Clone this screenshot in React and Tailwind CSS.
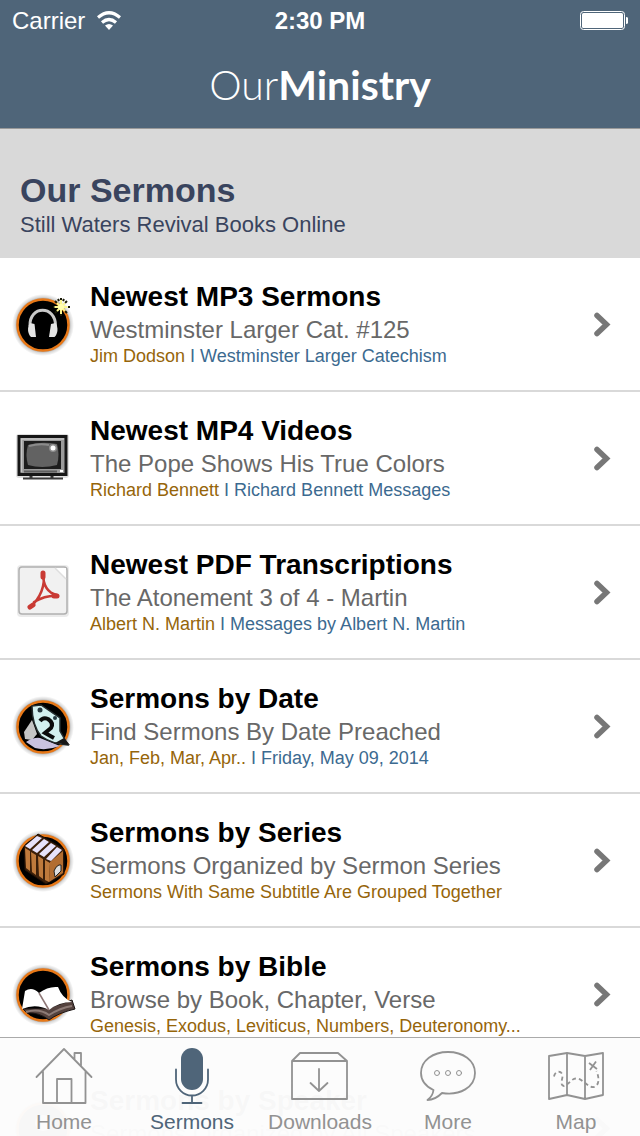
import { useState } from 'react';

// Round badge shared by most of the list icons
function Badge({ children }) {
  return (
    <svg className="w-16 h-16" viewBox="0 0 64 64" fill="none">
      <defs>
        <radialGradient id="badgeGlow">
          <stop offset="0.82" stopColor="#000" stopOpacity="0.45" />
          <stop offset="0.9" stopColor="#000" stopOpacity="0.15" />
          <stop offset="1" stopColor="#000" stopOpacity="0" />
        </radialGradient>
      </defs>
      <circle cx="31" cy="33" r="31" fill="url(#badgeGlow)" />
      <circle cx="31" cy="33" r="25.500" fill="#000" stroke="#e87817" strokeWidth="2.500" />
      {children}
    </svg>
  );
}

function HeadphonesIcon() {
  return (
    <Badge>
      <path d="M18 34 C17 13 44 13 43.500 34" stroke="#c9c9c9" strokeWidth="3" />
      <path d="M18 31 L22.500 32 L24 45 L19 45 C15.500 42 15 35 18 31Z" fill="#e4e4e4" />
      <path d="M43.500 31 L39 32 L37 45 L42.500 45 C46 42 46.500 35 43.500 31Z" fill="#e4e4e4" />
      <path d="M49 6v2M49 22v2M41 15h2M56 15h2M43 9l2 2M55 9l-2 2M43 21l2-2M55 21l-2-2M46 7l1 2M52 7l-1 2" stroke="#1b1b08" strokeWidth="2" />
      <path d="M49 8v14M42.500 15h13M45 11l8 8M53 11l-8 8" stroke="#fbf68e" strokeWidth="2" />
      <circle cx="49" cy="15" r="3" fill="#fffdb0" />
    </Badge>
  );
}

function TvIcon() {
  return (
    <svg className="w-16 h-16" viewBox="0 0 64 64" fill="none">
      <rect x="4" y="8" width="53" height="44" rx="3" fill="#000" opacity="0.12" />
      <path d="M19 49v4M40 49v4" stroke="#333" strokeWidth="3" />
      <path d="M11 52.500h40" stroke="#3a3a3a" strokeWidth="2" />
      <rect x="7" y="10.500" width="47" height="38" fill="#9b9b9b" stroke="#161616" strokeWidth="3" />
      <path d="M9.500 46V13H52" stroke="#c6c6c6" strokeWidth="1.500" />
      <rect x="12" y="15" width="37" height="28" fill="#1d1d1d" />
      <path d="M16 19 Q29 15 45 18 Q48 28 45 39 Q30 43 16 39 Q13 29 16 19Z" fill="#626262" />
      <path d="M17 20 Q28 17 37 19" stroke="#8b8b8b" strokeWidth="2" />
      <circle cx="41" cy="22" r="4" fill="#8f8f8f" />
      <circle cx="41" cy="22" r="2.500" fill="#fff" />
      <path d="M12 45.500h33" stroke="#5f5f5f" strokeWidth="2" />
      <path d="M48 45h3" stroke="#fff" strokeWidth="2" />
    </svg>
  );
}

function PdfIcon() {
  return (
    <svg className="w-16 h-16" viewBox="0 0 64 64" fill="none">
      <rect x="5" y="5" width="52" height="52" rx="4" fill="#000" opacity="0.08" />
      <rect x="7" y="7" width="48" height="47" rx="3" fill="#f1f1f1" stroke="#b0b0b0" strokeWidth="1.500" />
      <path d="M43 8 L54 19 L54 8Z" fill="#fff" />
      <path d="M43 8 L54 19" stroke="#dedede" strokeWidth="1.500" />
      <path d="M31 13 C31 25 36 33 45 35 M31 13 C34 25 28 39 18 47 M22 42 C29 38 37 35 46 36" stroke="#c93a34" strokeWidth="2.500" strokeLinecap="round" />
      <path d="M31 13v4M18 47l3-2M42 36h3" stroke="#c93a34" strokeWidth="5" strokeLinecap="round" />
    </svg>
  );
}

function DateIcon() {
  return (
    <Badge>
      <path d="M12 38 L20 26 L25 40 L20 46 L13 45Z" fill="#c5c5c5" />
      <path d="M14 48 Q22 43 28 44 L48 52 Q34 57 23 54Z" fill="#c9c2e0" />
      <path d="M20 12 L29 11 L48 24 L48 37 L56 51 Q40 50 29 42 Q20 31 20 12Z" fill="#d3f0ef" stroke="#242c2e" strokeWidth="1.500" />
      <path d="M28 27 Q31 23 36 25 Q42 29 39 34 L33 39 L42 44" stroke="#0c0c0c" strokeWidth="4" />
      <circle cx="28" cy="16" r="2.500" fill="#26383f" />
      <circle cx="43" cy="24" r="2" fill="#26383f" />
      <path d="M43 49 L58 51 L52 44Z" fill="#171717" />
    </Badge>
  );
}

function BooksIcon() {
  return (
    <Badge>
      <path d="M12 19 L26 6 L52 21 L52 46 L34 56 L13 42Z" fill="#3b1f0a" stroke="#1d0f05" strokeWidth="1" />
      <path d="M13 20l5 3v20l-4-3zM19 24l5 3v20l-4-3zM26 28l5 3v20l-4-3zM33 32l5 3-1 19-4-2z" fill="#bf7a3c" />
      <path d="M38 34 L51 23 L51 45 L37 54Z" fill="#b26d31" />
      <path d="M13 18 L25 8 L30 10 L18 21ZM20 22 L32 11 L37 14 L25 25ZM27 26 L39 15 L44 18 L32 29ZM34 31 L45 19 L50 22 L39 33Z" fill="#e6e2fb" />
      <path d="M42 43 Q45 36 49 37 V43 L43 49Z" fill="#dedede" stroke="#222" strokeWidth="1" />
    </Badge>
  );
}

function BibleIcon() {
  return (
    <Badge>
      <path d="M11 47 L15 51 Q27 50 37 58 Q46 51 63 47 L60 38 L37 46Z" fill="#54423e" stroke="#1b1413" strokeWidth="1" />
      <path d="M14 50 Q27 46 37 53 Q48 46 60 44" stroke="#8d7b76" strokeWidth="2" />
      <path d="M13 29 Q20 24 27 31 L37 48 Q24 41 10 47Z" fill="#fff" />
      <path d="M27 31 Q36 24 46 25 Q50 36 60 40 Q47 40 37 48Z" fill="#fff" />
      <path d="M27 31 L37 48" stroke="#8d7776" strokeWidth="1.500" />
    </Badge>
  );
}

function SpeakerIcon() {
  return (
    <Badge>
      <circle cx="31" cy="27" r="8" fill="#ccc" />
      <path d="M17 50 Q31 30 45 50Z" fill="#ccc" />
    </Badge>
  );
}

function Chevron() {
  return (
    <svg className="w-5 h-7 shrink-0" viewBox="0 0 20 28" fill="none">
      <path d="M5 5.500 L14.500 14.500 L5 23.500" stroke="#777" strokeWidth="5.500" strokeLinecap="round" />
    </svg>
  );
}

function TabSvg({ children }) {
  return (
    <svg className="w-15 h-15" viewBox="0 0 60 60" fill="none" stroke="currentColor" strokeWidth="1.800" strokeLinecap="round" strokeLinejoin="round">
      {children}
    </svg>
  );
}

const sermons = [
  { title: 'Newest MP3 Sermons', sub: 'Westminster Larger Cat. #125', by: 'Jim Dodson', extra: 'Westminster Larger Catechism', Icon: HeadphonesIcon },
  { title: 'Newest MP4 Videos', sub: 'The Pope Shows His True Colors', by: 'Richard Bennett', extra: 'Richard Bennett Messages', Icon: TvIcon },
  { title: 'Newest PDF Transcriptions', sub: 'The Atonement 3 of 4 - Martin', by: 'Albert N. Martin', extra: 'Messages by Albert N. Martin', Icon: PdfIcon },
  { title: 'Sermons by Date', sub: 'Find Sermons By Date Preached', by: 'Jan, Feb, Mar, Apr..', extra: 'Friday, May 09, 2014', Icon: DateIcon },
  { title: 'Sermons by Series', sub: 'Sermons Organized by Sermon Series', by: 'Sermons With Same Subtitle Are Grouped Together', Icon: BooksIcon },
  { title: 'Sermons by Bible', sub: 'Browse by Book, Chapter, Verse', by: 'Genesis, Exodus, Leviticus, Numbers, Deuteronomy...', Icon: BibleIcon },
  { title: 'Sermons by Speaker', sub: 'Sermons Organized by All Speakers', by: '', Icon: SpeakerIcon },
];

const tabs = [
  {
    name: 'Home',
    icon: (
      <TabSvg>
        <path d="M2.500 31 L30 3 L57.500 31M9 25.500V57H51.500V25.500M23 57V33H37.500V57M40.500 13V7H47V19.500" />
      </TabSvg>
    ),
  },
  {
    name: 'Sermons',
    icon: (
      <TabSvg>
        <rect x="19" y="2" width="22" height="42" rx="11" fill="currentColor" stroke="none" />
        <path d="M14 23.500V33.500A16 16 0 0 0 46 33.500V23.500M30 50V57M20.500 57H39.500" />
      </TabSvg>
    ),
  },
  {
    name: 'Downloads',
    icon: (
      <TabSvg>
        <path d="M2 15H57V53H2ZM2 15L10 7H48L57 15M29 23V45M20.500 37L29 45L37.500 37" />
      </TabSvg>
    ),
  },
  {
    name: 'More',
    icon: (
      <TabSvg>
        <path d="M15.500 44C7 40 3 34 3 27C3 14.500 15 6 30 6C45 6 57 14.500 57 27C57 41 42 50 24 47C20 51 15 54 9.500 54C13 51.500 15 48 15.500 44Z" />
        <g strokeWidth="1">
          <circle cx="19" cy="27" r="2.500" />
          <circle cx="30" cy="27" r="2.500" />
          <circle cx="41" cy="27" r="2.500" />
        </g>
      </TabSvg>
    ),
  },
  {
    name: 'Map',
    icon: (
      <TabSvg>
        <path d="M3 10L21 7L39 10L57 7V49L39 53L21 49L3 53ZM21 7V49M39 10V53" />
        <path d="M8 30.500C9 25 15 24 16.500 29C17 33 13 39 18 40C23 39 25 32 31 32.500C37 33 42 42 48 41C54 39 53 31 50.500 25" strokeDasharray="4 3" strokeLinecap="butt" />
        <path d="M43 17L51 23M50 15.500L44 24" strokeLinecap="butt" />
      </TabSvg>
    ),
  },
];

export default function App() {
  const [activeTab, setActiveTab] = useState('Sermons');

  return (
    <div className="relative h-screen flex flex-col overflow-hidden bg-white font-['Liberation_Sans',Arial,sans-serif]">
      <header className="shrink-0 bg-[#4f6579] text-white border-b border-[#999]">
        {/* Status bar */}
        <div className="grid grid-cols-3 items-center h-10 px-3 pt-[2px] text-[24px] leading-9">
          <div className="flex items-center gap-3">
            <span>Carrier</span>
            <svg className="w-6 h-5" viewBox="0 0 24 20" fill="none" stroke="#fff" strokeWidth="3.200">
              <path d="M1 6.500Q12 -3 23 6.500M5 11.500Q12 5.500 19 11.500" />
              <path d="M8 14.500Q12 11.500 16 14.500L12 19Z" fill="#fff" stroke="none" />
            </svg>
          </div>
          <span className="text-center font-bold">2:30 PM</span>
          <svg className="w-12 h-5 justify-self-end" viewBox="0 0 48 20" fill="none">
            <rect x="0.500" y="0.500" width="44" height="18" rx="3" stroke="#fff" />
            <rect x="2" y="2" width="41" height="15" rx="1.500" fill="#fff" />
            <path d="M46 6Q49 6.500 49 9.500Q49 12.500 46 13Z" fill="#fff" />
          </svg>
        </div>
        <div className="h-22 flex items-center justify-center font-[Lato,sans-serif] text-[41px] leading-[88px] pt-[2px]">
          <span className="font-light">Our</span>
          <span className="font-bold">Ministry</span>
        </div>
      </header>

      <main className="flex-1 overflow-y-auto [scrollbar-width:none]">
        <section className="bg-[#d9d9d9] text-[#39445e] px-5 pt-[42px] pb-[17px]">
          <h1 className="text-[34px] leading-[38px] font-bold">Our Sermons</h1>
          <p className="text-[22px] leading-8">Still Waters Revival Books Online</p>
        </section>

        <ul>
          {sermons.map(({ title, sub, by, extra, Icon }) => (
            <li key={title} className="border-b-2 border-[#d9d9d9]">
              <a href="#" className="flex items-center gap-[14px] h-[132px] pl-3 pr-7">
                <Icon />
                <div className="flex-1 whitespace-nowrap pb-[2px]">
                  <h2 className="text-[28px] leading-8 font-bold text-black">{title}</h2>
                  <p className="text-[24px] leading-[34px] text-[#686868]">{sub}</p>
                  <p className="text-[18px] leading-[18px] min-h-[18px] text-[#96650a]">
                    {by}
                    {extra && <span className="text-[#3c6a90]"> I {extra}</span>}
                  </p>
                </div>
                <Chevron />
              </a>
            </li>
          ))}
        </ul>
      </main>

      {/* Tab bar floats above the scrolling list */}
      <nav className="absolute inset-x-0 bottom-0 grid grid-cols-5 bg-[#fcfcfc]/98 border-t border-[#aaa]">
        {tabs.map((tab) => (
          <button
            key={tab.name}
            onClick={() => setActiveTab(tab.name)}
            className={`flex flex-col items-center gap-[2px] pt-2 ${
              activeTab === tab.name ? 'text-[#4f6579]' : 'text-[#929292]'
            }`}
          >
            {tab.icon}
            <span className="text-[21px] leading-7">{tab.name}</span>
          </button>
        ))}
      </nav>
    </div>
  );
}
